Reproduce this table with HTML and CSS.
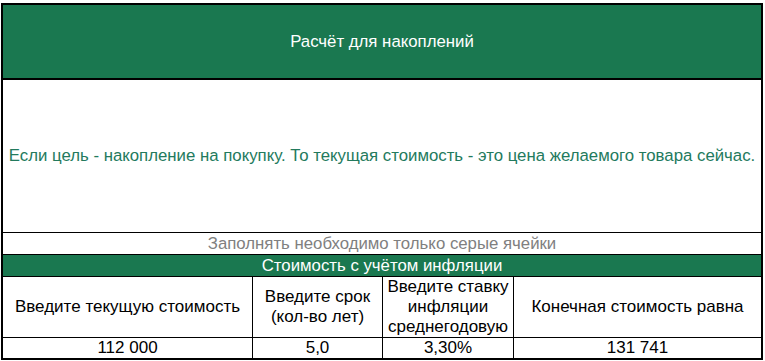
FILE: index.html
```html
<!DOCTYPE html>
<html lang="ru">
<head>
<meta charset="utf-8">
<title>Расчёт для накоплений</title>
<link rel="stylesheet" href="styles.css">
</head>
<body>
<div class="sheet">
  <div class="title">Расчёт для накоплений</div>
  <div class="note">Если цель - накопление на покупку. То текущая стоимость - это цена желаемого товара сейчас.</div>
  <div class="hint">Заполнять необходимо только серые ячейки</div>
  <div class="band">Стоимость с учётом инфляции</div>
  <div class="grid">
    <div class="cell head">Введите текущую стоимость</div>
    <div class="cell head">Введите срок<br>(кол-во лет)</div>
    <div class="cell head">Введите ставку инфляции среднегодовую</div>
    <div class="cell head last">Конечная стоимость равна</div>
    <div class="cell val">112 000</div>
    <div class="cell val">5,0</div>
    <div class="cell val">3,30%</div>
    <div class="cell val last">131 741</div>
  </div>
</div>
</body>
</html>
```

FILE: styles.css
```css
* { box-sizing: border-box; }
html, body { margin: 0; padding: 0; background: #fff; }
body {
  font-family: "Liberation Sans", Arial, sans-serif;
  font-size: 17px;
  color: #000;
}
.sheet {
  margin: 3px 0 0 1px;
  width: 762px;
  border: 2px solid #000;
}
.title {
  height: 75px;
  background: #1a7850;
  color: #fff;
  border-bottom: 2px solid #000;
  display: flex;
  align-items: center;
  justify-content: center;
  font-size: 16.8px;
}
.note {
  height: 153px;
  border-bottom: 1px solid #000;
  display: flex;
  align-items: center;
  justify-content: center;
  color: #237a5d;
  font-size: 16.8px;
  white-space: nowrap;
}
.hint {
  height: 22px;
  border-bottom: 1px solid #000;
  color: #808080;
  text-align: center;
  line-height: 21px;
  font-size: 16.8px;
}
.band {
  height: 22px;
  background: #1a7850;
  color: #fff;
  border-bottom: 1px solid #000;
  text-align: center;
  line-height: 21px;
  font-size: 16.8px;
}
.grid {
  display: grid;
  grid-template-columns: 250px 130px 131px 1fr;
  grid-template-rows: 61px 20px;
}
.cell {
  border-right: 1px solid #000;
  display: flex;
  align-items: center;
  justify-content: center;
  text-align: center;
  line-height: 20px;
  font-size: 17px;
}
.cell.last { border-right: 0; }
.head { border-bottom: 1px solid #000; }
```
